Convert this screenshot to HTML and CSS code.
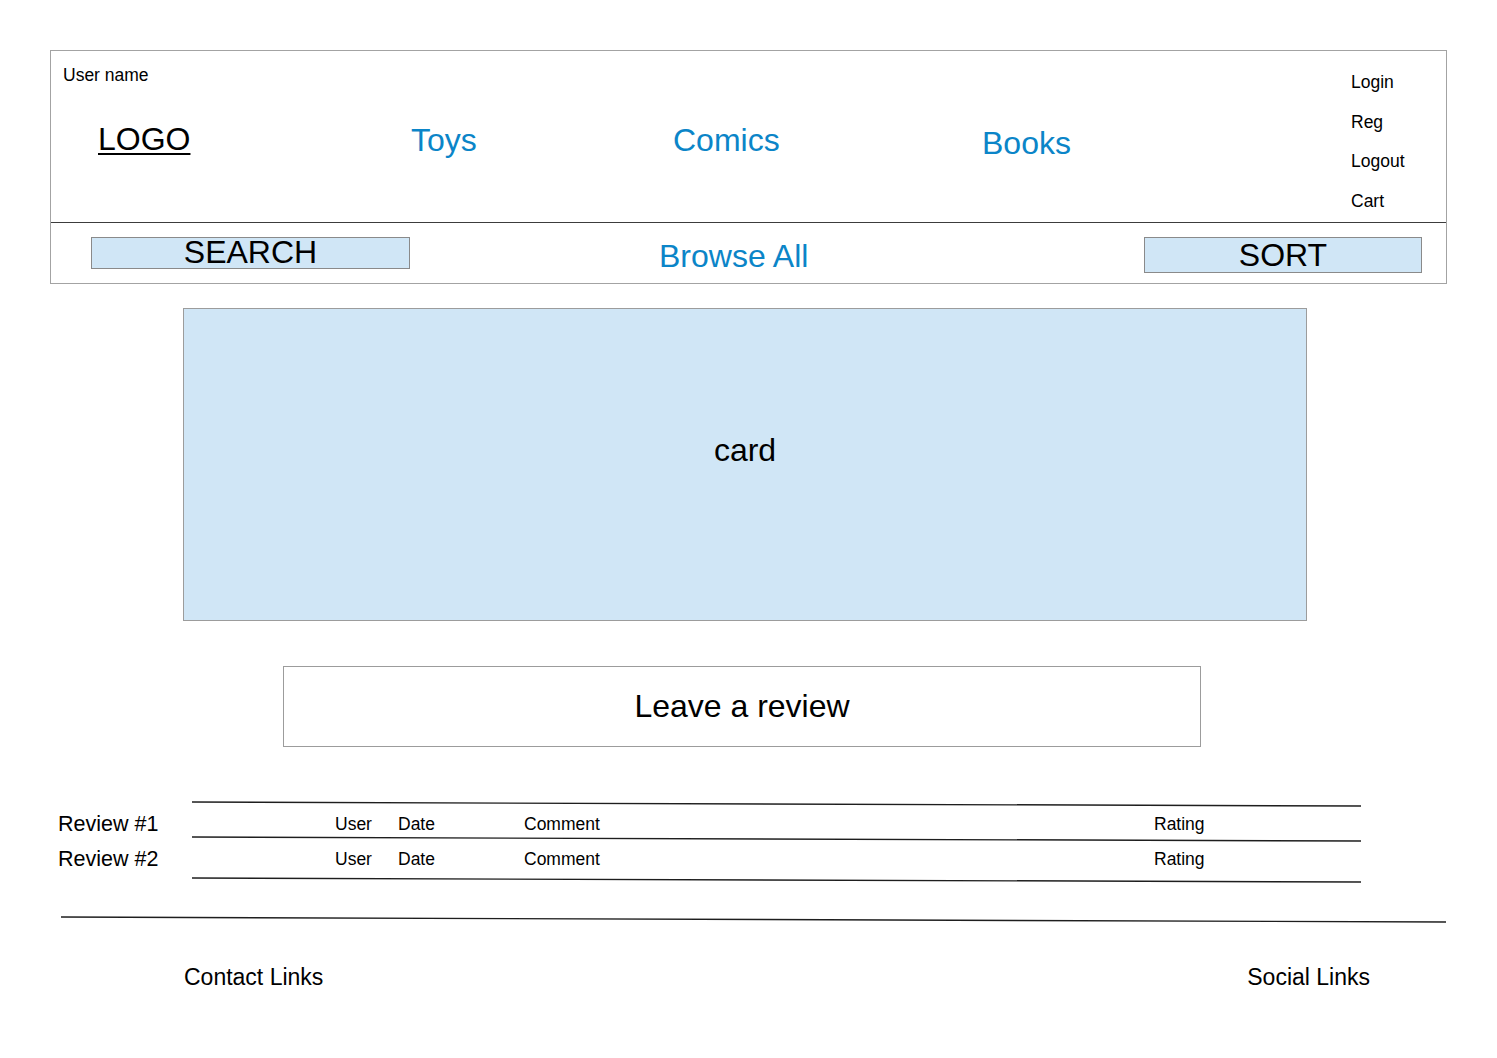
FILE: index.html
```html
<!DOCTYPE html>
<html lang="en">
<head>
<meta charset="utf-8">
<title>Shop wireframe</title>
<link rel="stylesheet" href="styles.css">
</head>
<body>
<div class="page">
  <header class="site-header">
    <div class="header-top">
      <div class="brand">
        <div class="username">User name</div>
        <a class="logo" href="#">LOGO</a>
      </div>
      <nav class="main-nav">
        <a class="nav-link nav-toys" href="#">Toys</a>
        <a class="nav-link nav-comics" href="#">Comics</a>
        <a class="nav-link nav-books" href="#">Books</a>
      </nav>
      <ul class="account">
        <li>Login</li>
        <li>Reg</li>
        <li>Logout</li>
        <li>Cart</li>
      </ul>
    </div>
    <div class="header-bottom">
      <div class="search-box">SEARCH</div>
      <a class="nav-link browse" href="#">Browse All</a>
      <div class="sort-box">SORT</div>
    </div>
  </header>

  <main>
    <section class="card">card</section>
    <div class="review-button">Leave a review</div>

    <section class="reviews">
      <svg class="rule" width="1169" height="6" viewBox="0 0 1169 6"><line x1="0" y1="1" x2="1169" y2="5" /></svg>
      <div class="review-row row-1">
        <span class="review-label">Review #1</span>
        <span>User</span>
        <span>Date</span>
        <span>Comment</span>
        <span>Rating</span>
      </div>
      <svg class="rule" width="1169" height="6" viewBox="0 0 1169 6"><line x1="0" y1="1" x2="1169" y2="5" /></svg>
      <div class="review-row row-2">
        <span class="review-label">Review #2</span>
        <span>User</span>
        <span>Date</span>
        <span>Comment</span>
        <span>Rating</span>
      </div>
      <svg class="rule" width="1169" height="6" viewBox="0 0 1169 6"><line x1="0" y1="1" x2="1169" y2="5" /></svg>
    </section>
  </main>

  <footer class="site-footer">
    <svg class="footer-rule" width="1385" height="7" viewBox="0 0 1385 7"><line x1="0" y1="1" x2="1385" y2="6" /></svg>
    <div class="footer-links">
      <span>Contact Links</span>
      <span>Social Links</span>
    </div>
  </footer>
</div>
</body>
</html>
```

FILE: styles.css
```css
* { box-sizing: border-box; }

html, body {
  margin: 0;
  padding: 0;
  background: #ffffff;
}

body {
  font-family: "Liberation Sans", Arial, sans-serif;
  color: #000;
}

.page {
  width: 1497px;
  padding-top: 50px;
}

a { text-decoration: none; }

/* ---------- header ---------- */
.site-header {
  margin-left: 50px;
  width: 1397px;
  border: 1px solid #a3a3a3;
}

.header-top {
  display: flex;
  height: 172px;
  border-bottom: 1px solid #3c3c3c;
}

.brand {
  width: 361px;
  display: flex;
  flex-direction: column;
  align-items: flex-start;
}

.username {
  font-size: 17.5px;
  line-height: 20px;
  padding: 14px 0 0 12px;
}

.logo {
  margin: 36px 0 0 47px;
  font-size: 32px;
  line-height: 37px;
  color: #000;
  text-decoration: underline;
  text-decoration-thickness: 2px;
  text-underline-offset: 3px;
}

.main-nav {
  display: flex;
  align-items: flex-start;
  padding-top: 71px;
}

.nav-link {
  font-size: 32px;
  line-height: 37px;
  color: #0b85c8;
}

.nav-toys { width: 262px; margin-left: -1px; }
.nav-comics { width: 309px; }
.nav-books { width: 369px; margin-top: 3px; }

.account {
  list-style: none;
  margin: 0;
  padding: 12px 0 0 0;
  font-size: 17.5px;
  line-height: 39.6px;
}

.header-bottom {
  display: flex;
  align-items: flex-start;
  height: 60px;
}

.search-box,
.sort-box {
  background: #d0e6f6;
  border: 1px solid #8a8a8a;
  text-align: center;
  font-size: 32px;
}

.search-box {
  margin: 14px 0 0 40px;
  width: 319px;
  height: 32px;
  line-height: 29px;
}

.browse {
  margin: 15px 0 0 249px;
}

.sort-box {
  margin: 14px 24px 0 auto;
  width: 278px;
  height: 36px;
  line-height: 34px;
}

/* ---------- card ---------- */
.card {
  margin: 24px 0 0 183px;
  width: 1124px;
  height: 313px;
  background: #d0e6f6;
  border: 1px solid #9c9c9c;
  text-align: center;
  font-size: 32px;
  line-height: 37px;
  padding-top: 123px;
}

.review-button {
  margin: 45px 0 0 283px;
  width: 918px;
  height: 81px;
  border: 1px solid #9c9c9c;
  text-align: center;
  font-size: 32px;
  line-height: 79px;
}

/* ---------- reviews ---------- */
.reviews {
  margin: 54px 0 0 58px;
}

.rule {
  display: block;
  margin-left: 134px;
}

.rule line,
.footer-rule line {
  stroke: #1e1e1e;
  stroke-width: 1.4;
}

.review-row {
  display: grid;
  grid-template-columns: 277px 63px 126px 630px auto;
  align-items: center;
  padding-top: 5px;
  font-size: 17.5px;
  line-height: 24px;
}

.row-1 { height: 29px; }
.row-2 { height: 35px; align-items: start; }

.review-label {
  font-size: 21.5px;
}

/* ---------- footer ---------- */
.site-footer {
  margin-top: 33px;
}

.footer-rule {
  display: block;
  margin-left: 61px;
}

.footer-links {
  display: flex;
  justify-content: space-between;
  padding: 0 127px 0 184px;
  margin-top: 41px;
  font-size: 23px;
  line-height: 26px;
}
```
